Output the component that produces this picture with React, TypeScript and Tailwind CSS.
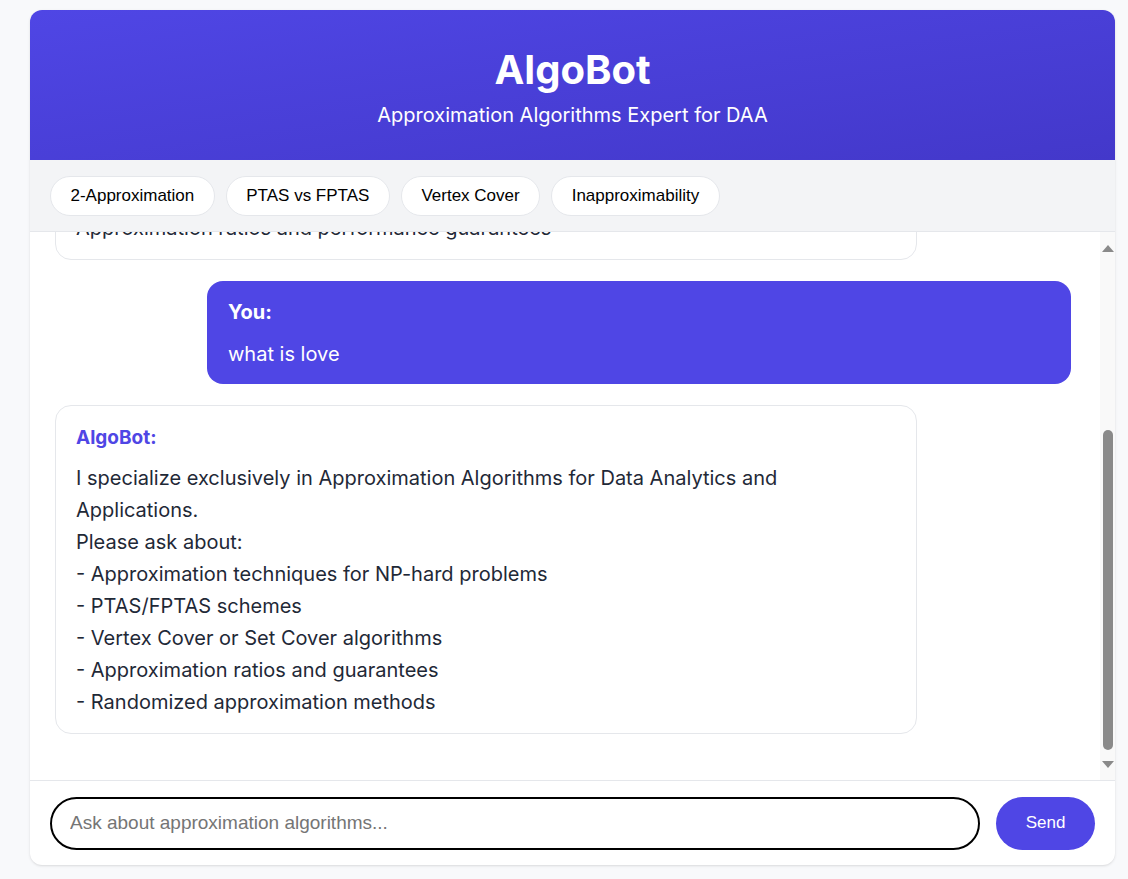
import { useEffect, useRef } from 'react'

interface Message {
  id: number
  role: 'bot' | 'user'
  text: string
}

const SUGGESTIONS = ['2-Approximation', 'PTAS vs FPTAS', 'Vertex Cover', 'Inapproximability']

const MESSAGES: Message[] = [
  {
    id: 1,
    role: 'bot',
    text:
      "Hello! I'm AlgoBot, your assistant for Approximation Algorithms in Data Analytics and Applications.\nI can help you with:\n- NP-hard optimization problems\n- Greedy and LP-rounding techniques\n- PTAS and FPTAS schemes\n- Vertex Cover, Set Cover and TSP approximations\nApproximation ratios and performance guarantees"
  },
  { id: 2, role: 'user', text: 'what is love' },
  {
    id: 3,
    role: 'bot',
    text:
      'I specialize exclusively in Approximation Algorithms for Data Analytics and Applications.\nPlease ask about:\n- Approximation techniques for NP-hard problems\n- PTAS/FPTAS schemes\n- Vertex Cover or Set Cover algorithms\n- Approximation ratios and guarantees\n- Randomized approximation methods'
  }
]

// Classic scrollbar look, drawn since the browser hides its own
function ScrollRail() {
  return (
    <div className="w-[15px] shrink-0 bg-[#f9f9f9] flex flex-col items-center">
      <svg width="12" height="7" viewBox="0 0 12 7" className="mt-[13px] shrink-0">
        <path d="M6 0 L12 7 L0 7 Z" fill="#8a8a8a" />
      </svg>
      <div className="h-[178px] shrink-0" />
      <div className="w-[10px] h-[320px] shrink-0 rounded-full bg-[#8a8a8a]" />
      <svg width="12" height="7" viewBox="0 0 12 7" className="mt-[11px] shrink-0">
        <path d="M0 0 L12 0 L6 7 Z" fill="#8a8a8a" />
      </svg>
    </div>
  )
}

export default function App() {
  const listRef = useRef<HTMLDivElement>(null)

  useEffect(() => {
    // Keep the latest message in view
    if (listRef.current) {
      listRef.current.scrollTop = listRef.current.scrollHeight
    }
  }, [])

  return (
    <div className="min-h-[879px] bg-[#f8f9fb] pt-[10px] pl-[30px] font-['Inter',sans-serif]">
      <div className="w-[1085px] h-[855px] bg-white rounded-xl overflow-hidden flex flex-col shadow-sm">
        {/* Header */}
        <div className="h-[150px] shrink-0 bg-linear-to-br from-[#4f46e5] to-[#4338ca] text-white flex flex-col items-center pt-[40px]">
          <h1 className="text-[40px] font-bold leading-none">AlgoBot</h1>
          <p className="text-[20px] mt-[15px] leading-none">Approximation Algorithms Expert for DAA</p>
        </div>

        {/* Suggestions */}
        <div className="h-[72px] shrink-0 bg-[#f3f4f6] border-b border-[#e5e7eb] flex items-center gap-[11px] px-[20px]">
          {SUGGESTIONS.map(s => (
            <button
              key={s}
              className="h-[40px] px-[19.5px] rounded-full bg-white border border-[#e5e7eb] text-[17px] text-black font-['Liberation_Sans',Arial,sans-serif]"
            >
              {s}
            </button>
          ))}
        </div>

        {/* Messages */}
        <div className="flex-1 min-h-0 flex">
          <div ref={listRef} className="flex-1 min-w-0 overflow-y-auto [scrollbar-width:none]">
            <div className="flex flex-col gap-[21px] pl-[25px] pr-[29px] pt-[25px] pb-[46px]">
              {MESSAGES.map(m =>
                m.role === 'user' ? (
                  <div
                    key={m.id}
                    className="self-end w-[864px] bg-[#4f46e5] text-white rounded-2xl px-[21px] pt-[18px] pb-[14px]"
                  >
                    <div className="font-bold text-[20px] leading-[26px] mb-[13px]">You:</div>
                    <div className="text-[20px] leading-[32px] whitespace-pre-line">{m.text}</div>
                  </div>
                ) : (
                  <div
                    key={m.id}
                    className="self-start w-[862px] bg-white border border-[#e5e7eb] rounded-2xl px-[20px] pt-[19px] pb-[15px]"
                  >
                    <div className="font-bold text-[19px] leading-[26px] mb-[11px] text-[#4f46e5]">AlgoBot:</div>
                    <div className="text-[20px] leading-[32px] text-[#1f2937] whitespace-pre-line">{m.text}</div>
                  </div>
                )
              )}
            </div>
          </div>
          <ScrollRail />
        </div>

        {/* Input */}
        <div className="h-[85px] shrink-0 border-t border-[#e5e7eb] flex items-center gap-[16px] px-[20px]">
          <input
            type="text"
            placeholder="Ask about approximation algorithms..."
            className="flex-1 h-[53px] rounded-full border-2 border-black px-[18px] text-[19px] outline-none font-['Liberation_Sans',Arial,sans-serif] placeholder:text-[#757575]"
          />
          <button className="w-[99px] h-[53px] rounded-full bg-[#4f46e5] text-white text-[17px] font-['Liberation_Sans',Arial,sans-serif]">
            Send
          </button>
        </div>
      </div>
    </div>
  )
}
